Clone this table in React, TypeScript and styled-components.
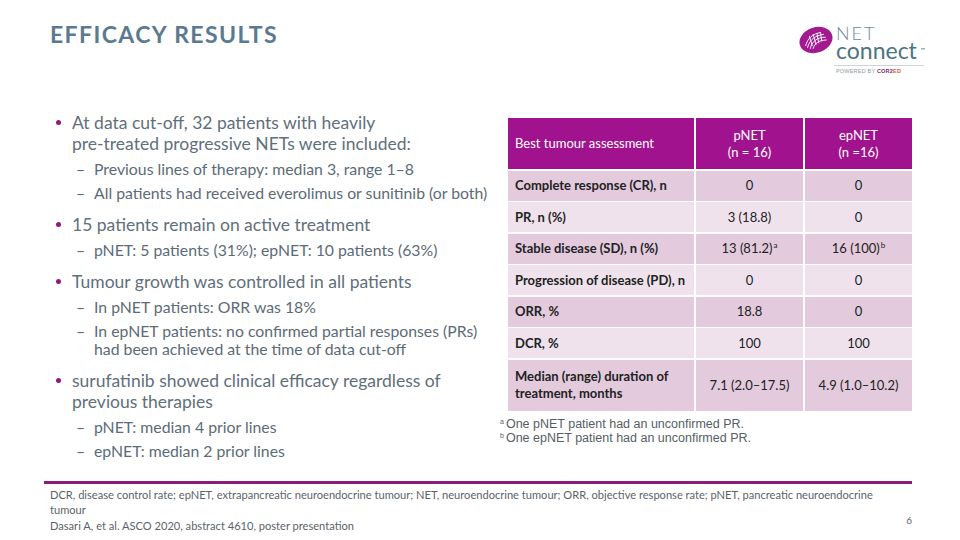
import React from 'react';
import styled, {createGlobalStyle} from 'styled-components';

const GlobalStyle = createGlobalStyle`
  html, body {
    margin: 0;
    padding: 0;
    background: #ffffff;
  }
  body {
    font-family: Lato, "Open Sans", sans-serif;
  }
`

const Page = styled.div`
  width: 960px;
  height: 540px;
  display: flex;
  flex-direction: column;
  box-sizing: border-box;
  overflow: hidden;
`

const Header = styled.div`
  display: flex;
  justify-content: space-between;
  align-items: flex-start;
  height: 112px;
  padding: 20px 36px 0 50px;
  box-sizing: border-box;
`

const Title = styled.h1`
  margin: 0;
  font-family: Lato, sans-serif;
  font-size: 23px;
  font-weight: 700;
  letter-spacing: 1.4px;
  color: #5b7a90;
`

const Logo = styled.div`
  display: flex;
  flex-direction: column;
  margin-top: 5px;
`

const LogoTop = styled.div`
  display: flex;
  align-items: flex-start;
  gap: 2px;
`

const LogoWords = styled.div`
  display: flex;
  flex-direction: column;
`

const LogoNet = styled.span`
  font-family: Lato, sans-serif;
  font-weight: 300;
  font-size: 18px;
  line-height: 17px;
  letter-spacing: 2px;
  color: #6e8a96;
`

const LogoConnect = styled.span`
  font-family: Lato, sans-serif;
  font-weight: 400;
  font-size: 23px;
  line-height: 17px;
  color: #4b7580;
  position: relative;
  sup {
    font-size: 6px;
    position: absolute;
    top: -1px;
    right: -8px;
  }
`

const LogoRule = styled.div`
  height: 1px;
  background: #cfd4d8;
  margin: 6px 0 2px 36px;
  width: 90px;
`

const LogoPowered = styled.span`
  font-family: "Liberation Sans", sans-serif;
  font-size: 5.5px;
  letter-spacing: 0.2px;
  color: #8c9aa2;
  margin-left: 38px;
  b {
    color: #7d2a6f;
  }
  em {
    font-style: normal;
    color: #d05a3a;
    font-weight: 700;
  }
`

const Main = styled.div`
  display: flex;
  padding-left: 50px;
  gap: 8px;
`

const LeftCol = styled.div`
  width: 450px;
`

const BulletList = styled.ul`
  list-style: none;
  margin: 0;
  padding: 0;
`

const Bullet = styled.li`
  position: relative;
  padding-left: 22px;
  margin-top: 12.5px;
  font-size: 17.5px;
  line-height: 21px;
  color: #5f6f7b;
  &:first-child {
    margin-top: 0;
  }
  &::before {
    content: '';
    position: absolute;
    left: 6px;
    top: 8px;
    width: 5px;
    height: 5px;
    border-radius: 50%;
    background: #8d1a7d;
  }
`

const BulletText = styled.span`
  display: block;
  max-width: 390px;
`

const NoBreak = styled.span`
  white-space: nowrap;
`

const SubList = styled.ul`
  list-style: none;
  margin: 5.5px 0 0 0;
  padding: 0;
  display: flex;
  flex-direction: column;
  gap: 6px;
`

const SubItem = styled.li`
  position: relative;
  padding-left: 22px;
  font-size: 15.8px;
  line-height: 18px;
  color: #5c6b77;
  &::before {
    content: '–';
    position: absolute;
    left: 4px;
    top: 0;
  }
`

const RightCol = styled.div`
  display: flex;
  flex-direction: column;
  margin-top: 6px;
`

const Table = styled.div`
  display: grid;
  grid-template-columns: 186px 107px 107px;
  column-gap: 2px;
  row-gap: 1.5px;
`

const Cell = styled.div<{ $head?: boolean; $shade?: boolean; $label?: boolean; $tall?: boolean }>`
  display: flex;
  align-items: center;
  justify-content: ${p => (p.$label ? 'flex-start' : 'center')};
  text-align: ${p => (p.$label ? 'left' : 'center')};
  padding: 0 7px;
  height: ${p => (p.$head || p.$tall ? '51px' : '30px')};
  background: ${p => (p.$head ? '#a1138e' : p.$shade ? '#e3cadd' : '#efe2ec')};
  color: ${p => (p.$head ? '#ffffff' : '#222222')};
  font-size: 13px;
  line-height: 17px;
  font-weight: ${p => (p.$label && !p.$head ? 700 : 400)};
  box-sizing: border-box;
  sup {
    font-size: 8px;
    line-height: 0;
    vertical-align: 5px;
    margin-left: 1px;
  }
`

const Notes = styled.div`
  margin: 6px 0 0 -8px;
  font-family: "Liberation Sans", Arial, sans-serif;
  font-size: 12.5px;
  line-height: 14px;
  color: #555e66;
  sup {
    font-size: 7px;
    vertical-align: 4px;
    line-height: 0;
    margin-right: 2px;
  }
`

const Footer = styled.div`
  margin-top: auto;
  padding: 0 48px 7px 44px;
`

const FooterRule = styled.div`
  height: 3px;
  background: #8a1d7b;
`

const FooterBody = styled.div`
  display: flex;
  justify-content: space-between;
  align-items: flex-end;
  padding: 3px 0 0 6px;
`

const FooterText = styled.p`
  margin: 0;
  width: 850px;
  font-family: Lato, sans-serif;
  font-size: 11.1px;
  line-height: 15.5px;
  color: #5b636a;
`

const PageNo = styled.span`
  font-family: Lato, sans-serif;
  font-size: 10px;
  color: #5b636a;
  margin-bottom: 7px;
`

const LogoMark = () => (
  <svg width="36" height="30" viewBox="0 0 38 32">
    <ellipse cx="19" cy="16" rx="18" ry="13.5" transform="rotate(-18 19 16)" fill="#a3198f" />
    <g fill="none" stroke="#ffffff" strokeWidth="1" strokeLinecap="round">
      <path d="M8 22 C10 14 16 9 24 8" />
      <path d="M10 24 C12 16 18 11 27 10" />
      <path d="M13 25 C14 18 20 13 29 13" />
      <path d="M16 25 C17 20 22 16 30 16" />
      <path d="M12 12 L15 22" />
      <path d="M16 10 L19 21" />
      <path d="M20 9 L22 19" />
      <path d="M24 9 L25 17" />
    </g>
  </svg>
);

const rows: { label: string; a: React.ReactNode; b: React.ReactNode; tall?: boolean }[] = [
  { label: 'Complete response (CR), n', a: '0', b: '0' },
  { label: 'PR, n (%)', a: '3 (18.8)', b: '0' },
  { label: 'Stable disease (SD), n (%)', a: <>13 (81.2)<sup>a</sup></>, b: <>16 (100)<sup>b</sup></> },
  { label: 'Progression of disease (PD), n', a: '0', b: '0' },
  { label: 'ORR, %', a: '18.8', b: '0' },
  { label: 'DCR, %', a: '100', b: '100' },
  { label: 'Median (range) duration of treatment, months', a: '7.1 (2.0–17.5)', b: '4.9 (1.0–10.2)', tall: true },
];

export default function App() {
  return (
    <>
      <GlobalStyle />
      <Page>
        <Header>
          <Title>EFFICACY RESULTS</Title>
          <Logo>
            <LogoTop>
              <LogoMark />
              <LogoWords>
                <LogoNet>NET</LogoNet>
                <LogoConnect>connect<sup>™</sup></LogoConnect>
              </LogoWords>
            </LogoTop>
            <LogoRule />
            <LogoPowered>POWERED BY <b>COR2</b><em>ED</em></LogoPowered>
          </Logo>
        </Header>

        <Main>
          <LeftCol>
            <BulletList>
              <Bullet>
                <BulletText>At data cut-off, 32 patients with heavily <NoBreak>pre-treated</NoBreak> progressive NETs were included:</BulletText>
                <SubList>
                  <SubItem>Previous lines of therapy: median 3, range 1–8</SubItem>
                  <SubItem>All patients had received everolimus or sunitinib (or both)</SubItem>
                </SubList>
              </Bullet>
              <Bullet>
                <BulletText>15 patients remain on active treatment</BulletText>
                <SubList>
                  <SubItem>pNET: 5 patients (31%); epNET: 10 patients (63%)</SubItem>
                </SubList>
              </Bullet>
              <Bullet>
                <BulletText>Tumour growth was controlled in all patients</BulletText>
                <SubList>
                  <SubItem>In pNET patients: ORR was 18%</SubItem>
                  <SubItem>In epNET patients: no confirmed partial responses (PRs) had been achieved at the time of data cut-off</SubItem>
                </SubList>
              </Bullet>
              <Bullet>
                <BulletText>surufatinib showed clinical efficacy regardless of previous therapies</BulletText>
                <SubList>
                  <SubItem>pNET: median 4 prior lines</SubItem>
                  <SubItem>epNET: median 2 prior lines</SubItem>
                </SubList>
              </Bullet>
            </BulletList>
          </LeftCol>

          <RightCol>
            <Table>
              <Cell $head $label>Best tumour assessment</Cell>
              <Cell $head>pNET<br />(n = 16)</Cell>
              <Cell $head>epNET<br />(n =16)</Cell>
              {rows.map((r, i) => (
                <React.Fragment key={r.label}>
                  <Cell $label $shade={i % 2 === 0} $tall={r.tall}><span>{r.label}</span></Cell>
                  <Cell $shade={i % 2 === 0} $tall={r.tall}><span>{r.a}</span></Cell>
                  <Cell $shade={i % 2 === 0} $tall={r.tall}><span>{r.b}</span></Cell>
                </React.Fragment>
              ))}
            </Table>
            <Notes>
              <div><sup>a</sup>One pNET patient had an unconfirmed PR.</div>
              <div><sup>b</sup>One epNET patient had an unconfirmed PR.</div>
            </Notes>
          </RightCol>
        </Main>

        <Footer>
          <FooterRule />
          <FooterBody>
            <FooterText>
              DCR, disease control rate; epNET, extrapancreatic neuroendocrine tumour; NET, neuroendocrine tumour; ORR, objective response rate; pNET, pancreatic neuroendocrine<br />
              tumour<br />
              Dasari A, et al. ASCO 2020, abstract 4610, poster presentation
            </FooterText>
            <PageNo>6</PageNo>
          </FooterBody>
        </Footer>
      </Page>
    </>
  );
}
